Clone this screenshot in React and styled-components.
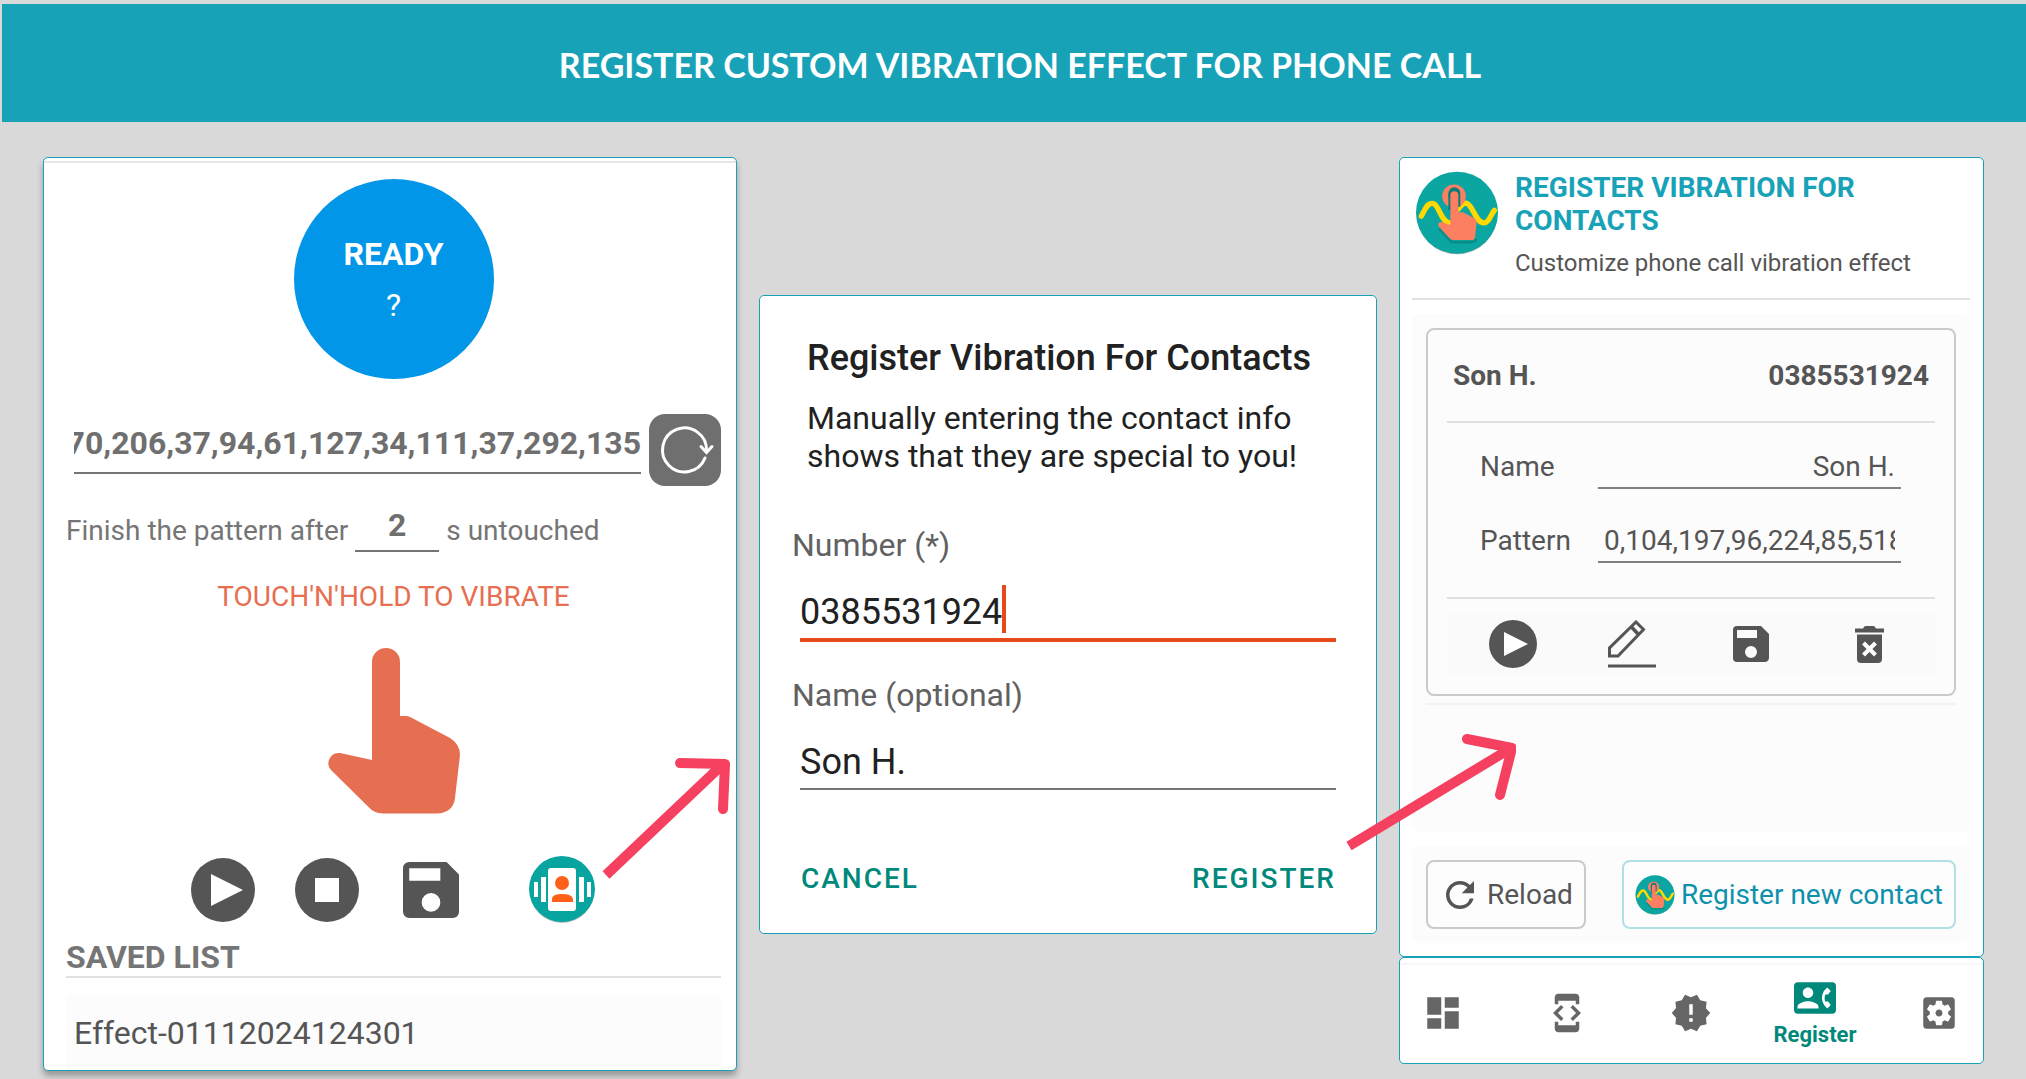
import React, { useEffect, useRef, useState } from "react";
import styled, { createGlobalStyle } from "styled-components";
import {
  MdContactPhone,
  MdDashboard,
  MdDeveloperMode,
  MdNewReleases,
  MdRefresh,
  MdSettingsApplications,
} from "react-icons/md";

const NAV_ITEMS = [
  { id: "dashboard", label: "Dashboard", icon: MdDashboard },
  { id: "developer", label: "Developer", icon: MdDeveloperMode },
  { id: "news", label: "News", icon: MdNewReleases },
  { id: "register", label: "Register", icon: MdContactPhone },
  { id: "settings", label: "Settings", icon: MdSettingsApplications },
];

/* ---------- icons ---------- */

const PlayIcon = ({ size }) => (
  <svg width={size} height={size} viewBox="0 0 48 48" aria-hidden="true">
    <circle cx="24" cy="24" r="24" fill="#555" />
    <path d="M15 12v24l24-12z" fill="#fff" />
  </svg>
);

const StopIcon = ({ size }) => (
  <svg width={size} height={size} viewBox="0 0 64 64" aria-hidden="true">
    <circle cx="32" cy="32" r="32" fill="#555" />
    <path d="M20 20h24v24H20z" fill="#fff" />
  </svg>
);

const SaveIcon = ({ size }) => (
  <svg width={size} height={size} viewBox="3 3 18 18" aria-hidden="true">
    <path
      fill="#555"
      d="M17 3H5a2 2 0 0 0-2 2v14a2 2 0 0 0 2 2h14c1.100 0 2-.9 2-2V7l-4-4zm-5 16a3 3 0 1 1 0-6 3 3 0 0 1 0 6zm3-10H5V5h10v4z"
    />
  </svg>
);

const PencilIcon = () => (
  <svg width="48" height="48" viewBox="0 0 48 48" fill="none" stroke="#555" aria-hidden="true">
    <path d="M1.500 36V28L28 2l7.500 7.500L10 36z" strokeWidth="3" />
    <path d="M23.500 7l7 7.500" strokeWidth="3.500" />
    <path d="M0 46h48" strokeWidth="3" />
  </svg>
);

const TrashIcon = () => (
  <svg width="29" height="37" viewBox="0 0 29 37" aria-hidden="true">
    <path
      fill="#555"
      d="M0 2.500h8C9 .8 9.500 0 11 0h7c1.500 0 2 .8 3 2.500h8v4H0zM2 8.500h25V33a4 4 0 0 1-4 4H6a4 4 0 0 1-4-4z"
    />
    <path d="M8.500 17l12 12m0-12l-12 12" stroke="#fff" strokeWidth="4" />
  </svg>
);

const ResetIcon = () => (
  <svg
    width="72"
    height="72"
    viewBox="0 0 72 72"
    fill="none"
    stroke="#fff"
    strokeWidth="3"
    strokeLinecap="round"
    aria-hidden="true"
  >
    <path d="M56 44A22 22 0 1 1 57.500 37" />
    <path d="M52 32.500l5.500 6 5.500-6" />
  </svg>
);

const HandIcon = () => (
  <svg width="132" height="166" viewBox="0 0 132 166" fill="#e76f51" aria-hidden="true">
    <path d="M44 14a14 14 0 0 1 28 0v54h6q3 0 6 2l38 20q10 6 10 17l-5 43q-2 15-18 15.500H55q-9 0-15-7L3 122Q-1 118 1 112q3-8 11-7l32 7z" />
  </svg>
);

const ContactVibrateIcon = () => (
  <svg width="66" height="68" viewBox="0 0 66 68" aria-hidden="true">
    <circle cx="33" cy="35" r="32" fill="#000" opacity=".25" />
    <circle cx="33" cy="33" r="33" fill="#08a5a0" />
    <g fill="#fff">
      <rect x="19" y="12" width="28" height="43" rx="3" />
      <path d="M12 21h5v25h-5zM5 26h4v15H5zM50 21h5v25h-5zM58 26h4v15h-4z" />
    </g>
    <g fill="#ff6019">
      <circle cx="33" cy="27" r="7" />
      <path d="M23 46v-3q0-5 10-5t11 5v3z" />
    </g>
  </svg>
);

const LogoIcon = ({ size }) => (
  <svg width={size} height={size} viewBox="26 31 252 254" aria-hidden="true">
    <circle cx="152" cy="161" r="122" fill="#000" opacity=".3" />
    <circle cx="152" cy="157" r="124" fill="#0ba6a1" />
    <g fill="none" stroke="#ffd900" strokeWidth="16" strokeLinecap="round">
      <path d="M44 168C54 150 60 129 77 129C98 129 102 186 130 188" />
      <path d="M156 146C164 135 170 127 180 128C200 132 208 188 233 188C250 188 254 162 265 150" />
    </g>
    <circle cx="143" cy="107" r="27" fill="none" stroke="#fc7f62" strokeWidth="17" />
    <path d="M126 150V98a18 18 0 0 1 36 0v40z" fill="#087d78" />
    <path
      d="M98 206l38 40h58q14 0 16-10"
      fill="none"
      stroke="#087d78"
      strokeWidth="8"
      opacity=".6"
    />
    <path
      d="M132 104a12 12 0 0 1 24 0v52h14l34 18q8 4 7 14l-4 40q-1 12-13 12h-54q-7 0-12-7l-31-34q-4-6 0-11 4-4 10-2l25 8z"
      fill="#fc7f62"
    />
  </svg>
);

const StepArrow = ({ width, height, shaft, head }) => (
  <svg
    width={width}
    height={height}
    fill="none"
    stroke="#f6405f"
    strokeWidth="10"
    strokeLinejoin="round"
    aria-hidden="true"
  >
    <path d={shaft} />
    <path d={head} strokeLinecap="round" />
  </svg>
);

/* ---------- screens ---------- */

const RecorderScreen = () => {
  const patternRef = useRef(null);
  const [pattern, setPattern] = useState("0,170,206,37,94,61,127,34,111,37,292,135");
  const [timeout, setTimeoutValue] = useState("2");

  // keep the newest part of the pattern in view
  useEffect(() => {
    patternRef.current.scrollLeft = patternRef.current.scrollWidth;
  }, [pattern]);

  return (
    <RecorderCard>
      <TopLine />
      <RecorderBody>
        <StatusCircle>
          <strong>READY</strong>
          <span>?</span>
        </StatusCircle>
        <PatternRow>
          <PatternInput
            ref={patternRef}
            aria-label="Vibration pattern"
            value={pattern}
            onChange={(e) => setPattern(e.target.value)}
          />
          <ResetButton type="button" aria-label="Reset pattern">
            <ResetIcon />
          </ResetButton>
        </PatternRow>
        <FinishRow>
          <label htmlFor="timeout">Finish the pattern after</label>
          <TimeoutInput
            id="timeout"
            value={timeout}
            onChange={(e) => setTimeoutValue(e.target.value)}
          />
          <span>s untouched</span>
        </FinishRow>
        <TouchHint>TOUCH'N'HOLD TO VIBRATE</TouchHint>
        <HandButton type="button" aria-label="Touch and hold to vibrate">
          <HandIcon />
        </HandButton>
        <Controls>
          <IconButton type="button" aria-label="Play">
            <PlayIcon size={64} />
          </IconButton>
          <IconButton type="button" aria-label="Stop">
            <StopIcon size={64} />
          </IconButton>
          <IconButton type="button" aria-label="Save">
            <SaveIcon size={56} />
          </IconButton>
          <ContactButton type="button" aria-label="Register for contact">
            <ContactVibrateIcon />
          </ContactButton>
        </Controls>
        <ListTitle>SAVED LIST</ListTitle>
        <SavedItem>Effect-01112024124301</SavedItem>
      </RecorderBody>
      <RecorderArrow>
        <StepArrow
          width={132}
          height={126}
          shaft="M5 118L122 7"
          head="M79 6L124 7L122 52"
        />
      </RecorderArrow>
    </RecorderCard>
  );
};

const RegisterDialog = () => {
  const [number, setNumber] = useState("0385531924");
  const [name, setName] = useState("Son H.");

  return (
    <DialogCard>
      <DialogTitle>Register Vibration For Contacts</DialogTitle>
      <DialogText>
        Manually entering the contact info shows that they are special to you!
      </DialogText>
      <DialogLabel htmlFor="number">Number (*)</DialogLabel>
      <DialogField $active>
        <input id="number" value={number} onChange={(e) => setNumber(e.target.value)} />
        <Caret />
      </DialogField>
      <DialogLabel htmlFor="name" $next>
        Name (optional)
      </DialogLabel>
      <DialogField>
        <input id="name" value={name} onChange={(e) => setName(e.target.value)} />
      </DialogField>
      <DialogActions>
        <TextButton type="button">CANCEL</TextButton>
        <TextButton type="button">REGISTER</TextButton>
      </DialogActions>
      <DialogArrow>
        <StepArrow
          width={172}
          height={120}
          shaft="M5 113L164 17"
          head="M123 6L168 15L156 62"
        />
      </DialogArrow>
    </DialogCard>
  );
};

const ContactsScreen = () => (
  <ContactsColumn>
    <ContactsCard>
      <ContactsHeader>
        <LogoIcon size={84} />
        <div>
          <h2>REGISTER VIBRATION FOR CONTACTS</h2>
          <p>Customize phone call vibration effect</p>
        </div>
      </ContactsHeader>
      <ListPanel>
        <ContactCard>
          <ContactHead>
            <span>Son H.</span>
            <span>0385531924</span>
          </ContactHead>
          <ContactFields>
            <label htmlFor="contact-name">Name</label>
            <FieldInput id="contact-name" $right defaultValue="Son H." />
            <label htmlFor="contact-pattern">Pattern</label>
            <FieldInput id="contact-pattern" defaultValue="0,104,197,96,224,85,518,92" />
          </ContactFields>
          <ContactActions>
            <IconButton type="button" aria-label="Play">
              <PlayIcon size={48} />
            </IconButton>
            <IconButton type="button" aria-label="Edit">
              <PencilIcon />
            </IconButton>
            <IconButton type="button" aria-label="Save">
              <SaveIcon size={36} />
            </IconButton>
            <IconButton type="button" aria-label="Delete">
              <TrashIcon />
            </IconButton>
          </ContactActions>
        </ContactCard>
        <ListEnd />
      </ListPanel>
      <ButtonPanel>
        <OutlineButton type="button">
          <MdRefresh size={42} />
          Reload
        </OutlineButton>
        <OutlineButton type="button" $accent>
          <LogoIcon size={40} />
          Register new contact
        </OutlineButton>
      </ButtonPanel>
    </ContactsCard>
    <NavBar>
      {NAV_ITEMS.map(({ id, label, icon: Icon }) => (
        <NavLink key={id} href={`#${id}`} aria-label={label} $active={id === "register"}>
          <Icon size={42} />
          {id === "register" && <span>{label}</span>}
        </NavLink>
      ))}
    </NavBar>
  </ContactsColumn>
);

const App = () => (
  <>
    <GlobalStyle />
    <Banner>
      <h1>REGISTER CUSTOM VIBRATION EFFECT FOR PHONE CALL</h1>
    </Banner>
    <Screens>
      <RecorderScreen />
      <RegisterDialog />
      <ContactsScreen />
    </Screens>
  </>
);

export default App;

/* ---------- styles ---------- */

const GlobalStyle = createGlobalStyle`
  * {
    box-sizing: border-box;
  }

  body {
    margin: 0;
    background: #d9d9d9;
    font-family: Roboto, sans-serif;
    color: #555;
  }

  h1, h2, h3, p {
    margin: 0;
  }

  input, button {
    font-family: inherit;
    color: inherit;
    border-radius: 0;
  }

  button {
    cursor: pointer;
  }

  svg {
    display: block;
    flex-shrink: 0;
  }
`;

const Banner = styled.header`
  margin: 4px 0 0 2px;
  padding: 41px 0 37px 12px;
  background: #18a2b8;
  text-align: center;

  h1 {
    font-family: Lato, sans-serif;
    font-size: 34px;
    line-height: 40px;
    font-weight: bold;
    color: #fff;
  }
`;

const Screens = styled.main`
  display: grid;
  grid-template-columns: 694fr 618fr 585fr;
  align-items: start;
  gap: 22px;
  padding: 35px 42px 8px 43px;
`;

const Card = styled.section`
  position: relative;
  min-width: 0;
  background: #fff;
  border: 1px solid #18a2b8;
  border-radius: 5px;
`;

const IconButton = styled.button`
  display: flex;
  align-items: center;
  justify-content: center;
  padding: 0;
  border: 0;
  background: none;
`;

const RecorderCard = styled(Card)`
  box-shadow: 0 5px 6px rgba(0, 0, 0, 0.3);
`;

const TopLine = styled.div`
  margin-top: 3px;
  height: 2px;
  background: #e6e6e6;
`;

const RecorderBody = styled.div`
  display: flex;
  flex-direction: column;
  align-items: center;
  padding: 16px 15px 0 22px;
  color: #757575;
`;

const StatusCircle = styled.div`
  display: flex;
  flex-direction: column;
  align-items: center;
  justify-content: center;
  width: 200px;
  height: 200px;
  padding-top: 2px;
  border-radius: 50%;
  background: #0296e8;
  color: #fff;
  font-size: 32px;
  line-height: 51px;
`;

const PatternRow = styled.div`
  display: flex;
  align-items: flex-start;
  gap: 8px;
  align-self: stretch;
  margin-top: 35px;
  padding-left: 8px;
`;

const PatternInput = styled.input`
  flex: 1;
  min-width: 0;
  height: 60px;
  padding: 0;
  border: 0;
  border-bottom: 2px solid #757575;
  background: none;
  color: #6f6f6f;
  font-size: 32px;
  font-weight: bold;
  outline: none;
`;

const ResetButton = styled(IconButton)`
  border-radius: 16px;
  background: #6f6f6f;
`;

const FinishRow = styled.div`
  display: flex;
  align-items: flex-start;
  align-self: stretch;
  gap: 7px;
  margin-top: 14px;
  font-size: 28px;
  line-height: 61px;
`;

const TimeoutInput = styled.input`
  width: 84px;
  height: 52px;
  padding: 0;
  border: 0;
  border-bottom: 2px solid #757575;
  background: none;
  color: #6f6f6f;
  font-size: 32px;
  font-weight: bold;
  text-align: center;
  outline: none;
`;

const TouchHint = styled.p`
  margin-top: 16px;
  color: #e76f51;
  font-size: 28px;
  line-height: 40px;
`;

const HandButton = styled(IconButton)`
  margin-top: 31px;
`;

const Controls = styled.div`
  display: flex;
  align-items: center;
  gap: 40px;
  margin-top: 42px;
  padding-right: 2px;

  ${IconButton} {
    min-width: 64px;
  }
`;

const ContactButton = styled(IconButton)`
  margin-left: 26px;
`;

const ListTitle = styled.h3`
  align-self: stretch;
  margin-top: 14px;
  border-bottom: 2px solid #e0e0e0;
  font-size: 32px;
  line-height: 38px;
`;

const SavedItem = styled.p`
  align-self: stretch;
  margin-top: 18px;
  padding-left: 8px;
  background: #fcfcfc;
  color: #555;
  font-size: 32px;
  line-height: 74px;
`;

const RecorderArrow = styled.div`
  position: absolute;
  right: 3px;
  top: 599px;
  pointer-events: none;
`;

const DialogCard = styled(Card)`
  z-index: 1;
  margin-top: 138px;
  padding: 40px 40px 34px 32px;
`;

const DialogTitle = styled.h2`
  padding-left: 15px;
  color: #212121;
  font-size: 36px;
  line-height: 44px;
  font-weight: 500;
`;

const DialogText = styled.p`
  margin-top: 19px;
  padding-left: 15px;
  color: #212121;
  font-size: 32px;
  line-height: 38px;
`;

const DialogLabel = styled.label`
  display: block;
  margin-top: ${({ $next }) => ($next ? "33px" : "50px")};
  color: #616161;
  font-size: 32px;
  line-height: 40px;
`;

const DialogField = styled.div`
  display: flex;
  align-items: flex-start;
  margin: 20px 0 0 8px;
  border-bottom: ${({ $active }) => ($active ? "4px solid #e64a19" : "2px solid #757575")};

  input {
    field-sizing: content;
    height: 53px;
    padding: 0;
    border: 0;
    background: none;
    color: #212121;
    font-size: 36px;
    outline: none;
  }
`;

const Caret = styled.span`
  width: 4px;
  height: 48px;
  background: #e64a19;
`;

const DialogActions = styled.div`
  display: flex;
  justify-content: space-between;
  margin-top: 69px;
  padding-left: 9px;
`;

const TextButton = styled.button`
  padding: 0;
  border: 0;
  background: none;
  color: #00897b;
  font-size: 28px;
  line-height: 40px;
  font-weight: 500;
  letter-spacing: 2px;
`;

const DialogArrow = styled.div`
  position: absolute;
  right: -140px;
  bottom: 80px;
  pointer-events: none;
`;

const ContactsColumn = styled.div`
  min-width: 0;
`;

const ContactsCard = styled(Card)`
  padding: 13px 13px 13px 12px;
`;

const ContactsHeader = styled.header`
  display: flex;
  gap: 16px;
  padding: 0 0 20px 3px;
  border-bottom: 2px solid #e2e2e2;

  h2 {
    color: #18a2b8;
    font-size: 28px;
    line-height: 33px;
    font-weight: bold;
  }

  p {
    margin-top: 11px;
    font-size: 24px;
    line-height: 30px;
  }
`;

const Panel = styled.div`
  margin-top: 14px;
  padding: 14px;
  border-radius: 8px;
  background: #fcfcfc;
`;

const ListPanel = styled(Panel)`
  min-height: 518px;
`;

const ContactCard = styled.article`
  padding: 0 19px 20px;
  border: 2px solid #cacaca;
  border-radius: 8px;
  font-size: 28px;
`;

const ContactHead = styled.div`
  display: flex;
  justify-content: space-between;
  padding: 0 6px;
  border-bottom: 2px solid #e0e0e0;
  font-weight: bold;
  line-height: 91px;
`;

const ContactFields = styled.div`
  display: grid;
  grid-template-columns: 118px 1fr;
  row-gap: 30px;
  padding: 22px 34px 34px 33px;
  border-bottom: 2px solid #e0e0e0;
  line-height: 44px;
`;

const FieldInput = styled.input`
  width: 100%;
  min-width: 0;
  height: 44px;
  padding: 0 6px;
  border: 0;
  border-bottom: 2px solid #808080;
  background: none;
  font-size: 28px;
  text-align: ${({ $right }) => ($right ? "right" : "left")};
  outline: none;
`;

const ContactActions = styled.div`
  display: grid;
  grid-template-columns: repeat(4, 1fr);
  margin-top: 14px;
  padding: 7px 6px 6px;
  background: #fafafa;
`;

const ListEnd = styled.div`
  margin-top: 7px;
  height: 2px;
  background: #f2f2f2;
`;

const ButtonPanel = styled(Panel)`
  display: flex;
  justify-content: space-between;
`;

const OutlineButton = styled.button`
  display: flex;
  align-items: center;
  gap: 6px;
  height: 69px;
  padding: 0 11px;
  border: 2px solid ${({ $accent }) => ($accent ? "#b0dfe6" : "#cacaca")};
  border-radius: 8px;
  background: #fdfdfd;
  color: ${({ $accent }) => ($accent ? "#0f91ae" : "#555")};
  font-size: 28px;
  white-space: nowrap;
`;

const NavBar = styled(Card).attrs({ as: "nav" })`
  display: flex;
  align-items: center;
  justify-content: space-between;
  height: 107px;
  padding: 5px 23px 0 22px;
  background: linear-gradient(#fff 5px, #f7f7f7 5px, #f7f7f7 7px, #fff 7px);
`;

const NavLink = styled.a`
  display: flex;
  flex-direction: column;
  align-items: center;
  width: 42px;
  color: ${({ $active }) => ($active ? "#00897b" : "#666")};
  font-size: 22px;
  line-height: 28px;
  font-weight: bold;
  text-decoration: none;

  span {
    padding-top: 2px;
  }
`;
